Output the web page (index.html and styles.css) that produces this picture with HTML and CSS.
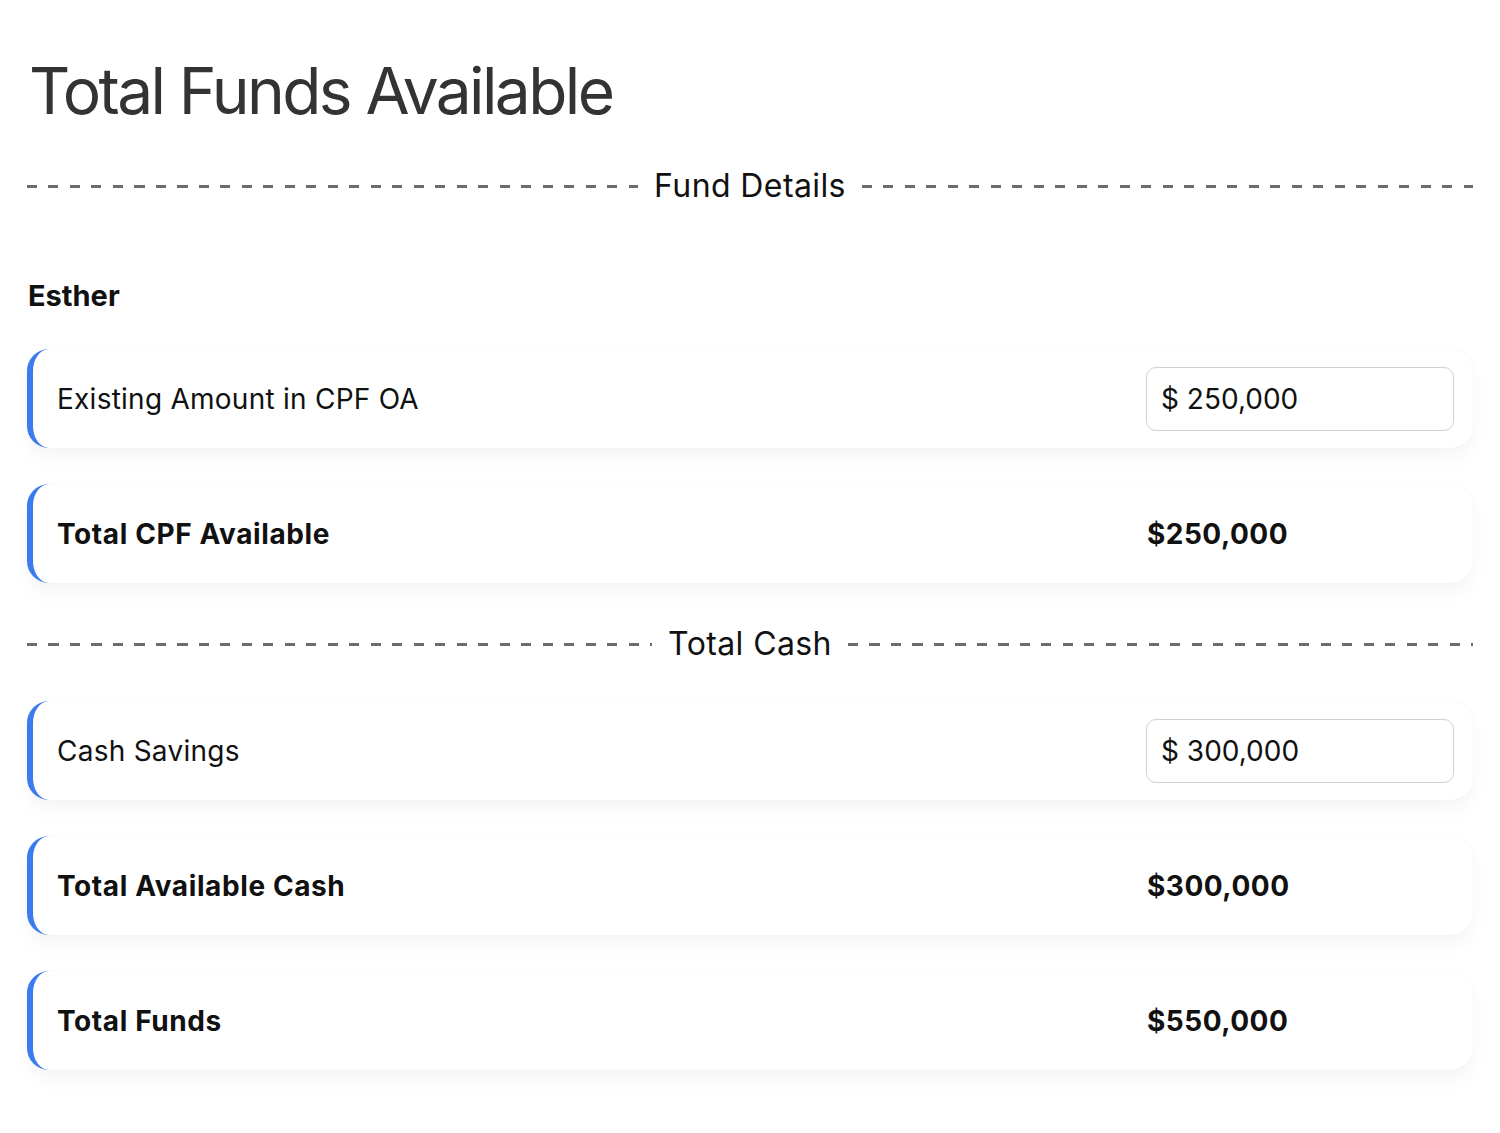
FILE: index.html
```html
<!DOCTYPE html>
<html lang="en">
<head>
<meta charset="utf-8">
<title>Total Funds Available</title>
<link rel="stylesheet" href="styles.css">
</head>
<body>
<main class="page">
  <h1 class="title">Total Funds Available</h1>

  <div class="divider"><span class="divider-line"></span><span class="divider-text">Fund Details</span><span class="divider-line"></span></div>

  <h2 class="person">Esther</h2>

  <div class="cards cards-first">
    <div class="card">
      <span class="label">Existing Amount in CPF OA</span>
      <div class="value"><div class="input">$ 250,000</div></div>
    </div>
    <div class="card">
      <span class="label bold">Total CPF Available</span>
      <div class="value"><span class="amount">$250,000</span></div>
    </div>
  </div>

  <div class="divider divider-cash"><span class="divider-line"></span><span class="divider-text">Total Cash</span><span class="divider-line"></span></div>

  <div class="cards">
    <div class="card">
      <span class="label">Cash Savings</span>
      <div class="value"><div class="input">$ 300,000</div></div>
    </div>
    <div class="card">
      <span class="label bold">Total Available Cash</span>
      <div class="value"><span class="amount">$300,000</span></div>
    </div>
    <div class="card">
      <span class="label bold">Total Funds</span>
      <div class="value"><span class="amount">$550,000</span></div>
    </div>
  </div>
</main>
</body>
</html>
```
FILE: styles.css
```css
* { box-sizing: border-box; }
html, body { margin: 0; padding: 0; background: #ffffff; }
body {
  font-family: Inter, "Noto Sans", "DejaVu Sans", sans-serif;
  color: #111;
}
.page {
  padding: 52px 27px 40px 27px;
}
.title {
  margin: 0 0 0 2px;
  font-size: 64px;
  line-height: 77px;
  font-weight: 400;
  color: #333;
  letter-spacing: -2.6px;
}
.divider {
  display: flex;
  align-items: center;
  margin-top: 38px;
  height: 38px;
}
.divider-line {
  flex: 1;
  height: 3px;
  background: repeating-linear-gradient(to right, #6c6c6c 0 10px, transparent 10px 21.5px);
}
.divider-text {
  padding: 0 16px;
  font-size: 32px;
  line-height: 38px;
  letter-spacing: 0.4px;
  color: #111;
}
.person {
  margin: 73px 0 0 1px;
  font-size: 29px;
  line-height: 36px;
  font-weight: 700;
  color: #111;
}
.cards {
  display: flex;
  flex-direction: column;
  gap: 36px;
}
.cards-first { margin-top: 35px; }
.divider-cash { margin-top: 42px; }
.divider-cash + .cards { margin-top: 38px; }
.card {
  display: flex;
  align-items: center;
  height: 99px;
  padding: 0 19px 0 24px;
  background: #fff;
  border-left: 6px solid #3a7bef;
  border-radius: 22px;
  box-shadow: 0 0 2px rgba(0, 0, 0, 0.06), 0 10px 18px rgba(0, 0, 0, 0.04);
}
.label {
  flex: 1;
  font-size: 28px;
  line-height: 34px;
  letter-spacing: 0.25px;
  color: #111;
}
.label.bold { font-weight: 700; letter-spacing: 0.6px; }
.value {
  width: 308px;
  flex: none;
}
.amount {
  font-size: 28px;
  font-weight: 700;
  letter-spacing: 0.5px;
  color: #111;
  padding-left: 1px;
}
.input {
  height: 64px;
  display: flex;
  align-items: center;
  padding-left: 14px;
  border: 1.5px solid #d2d2d2;
  border-radius: 10px;
  font-size: 28px;
  color: #111;
}
```
